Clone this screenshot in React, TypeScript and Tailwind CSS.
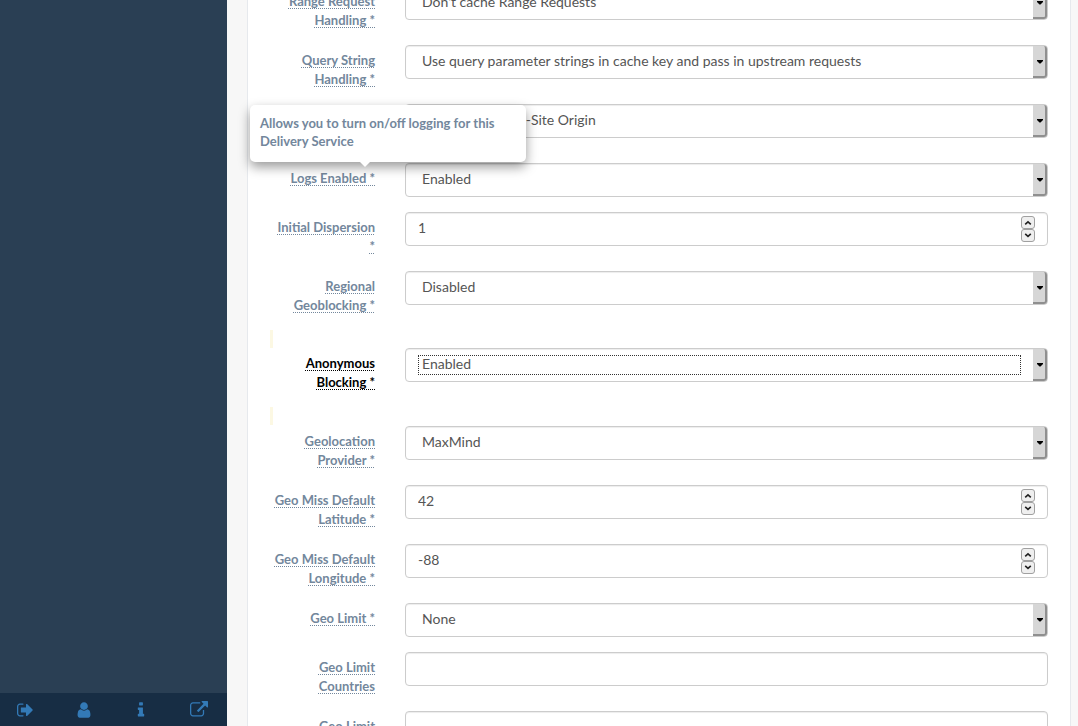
import React from "react";

type Field = {
  id: string;
  label: string;
  kind: "select" | "number" | "text";
  value?: string;
  help?: string;
  changed?: boolean;
  focused?: boolean;
};

const fields: Field[] = [
  { id: "range", label: "Range Request Handling *", kind: "select", value: "Don't cache Range Requests" },
  {
    id: "query",
    label: "Query String Handling *",
    kind: "select",
    value: "Use query parameter strings in cache key and pass in upstream requests",
  },
  { id: "multisite", label: "Use Multi-Site Origin *", kind: "select", value: "Do not use Multi-Site Origin" },
  {
    id: "logs",
    label: "Logs Enabled *",
    kind: "select",
    value: "Enabled",
    help: "Allows you to turn on/off logging for this Delivery Service",
  },
  { id: "dispersion", label: "Initial Dispersion *", kind: "number", value: "1" },
  { id: "regional", label: "Regional Geoblocking *", kind: "select", value: "Disabled" },
  { id: "anonymous", label: "Anonymous Blocking *", kind: "select", value: "Enabled", changed: true, focused: true },
  { id: "provider", label: "Geolocation Provider *", kind: "select", value: "MaxMind" },
  { id: "latitude", label: "Geo Miss Default Latitude *", kind: "number", value: "42" },
  { id: "longitude", label: "Geo Miss Default Longitude *", kind: "number", value: "-88" },
  { id: "limit", label: "Geo Limit *", kind: "select", value: "None" },
  { id: "countries", label: "Geo Limit Countries", kind: "text" },
  { id: "redirect", label: "Geo Limit Redirect URL", kind: "text" },
];

const controlBase =
  "block h-[34px] w-full appearance-none rounded border border-[#ccc] bg-white text-[14px] leading-5 text-[#555] shadow-[inset_0_1px_1px_rgba(0,0,0,0.075)] outline-none";

function SelectControl({ field }: { field: Field }) {
  return (
    <div className="relative">
      <select id={field.id} defaultValue={field.value} className={`${controlBase} pb-[2px] pl-4 pr-6`}>
        <option>{field.value}</option>
      </select>
      {field.focused && (
        <span className="pointer-events-none absolute bottom-[7px] left-[13px] right-[27px] top-[7px] border border-dotted border-[#333]" />
      )}
      <span className="pointer-events-none absolute bottom-px right-px top-px flex w-[14px] items-center justify-center rounded-r-[3px] border-b-2 border-r-2 border-[#8f8f8f] bg-[#d6d6d6]">
        <svg width="6" height="4" viewBox="0 0 6 4" className="ml-[2px] mt-px">
          <path d="M0 0h6v1L3.5 3.5h-1L0 1z" fill="#000" />
        </svg>
      </span>
    </div>
  );
}

function StepButton({ label, path }: { label: string; path: string }) {
  return (
    <button
      type="button"
      aria-label={label}
      className="flex h-[13px] w-[14px] items-center justify-center rounded-[3px] border border-[#a0a0a0] bg-[#efefef]"
    >
      <svg width="8" height="6" viewBox="0 0 8 6" fill="none" stroke="#222" strokeWidth="1.6">
        <path d={path} />
      </svg>
    </button>
  );
}

function NumberControl({ field }: { field: Field }) {
  return (
    <div className="relative">
      <input
        id={field.id}
        type="number"
        defaultValue={field.value}
        className={`${controlBase} pb-1 pl-3 pr-8 [appearance:textfield] [&::-webkit-inner-spin-button]:appearance-none`}
      />
      <div className="absolute right-[13px] top-1 flex flex-col">
        <StepButton label={`Increase ${field.label}`} path="M1.2 4.4 4 1.8l2.8 2.6" />
        <StepButton label={`Decrease ${field.label}`} path="M1.2 0.8 4 3.4l2.8-2.6" />
      </div>
    </div>
  );
}

function FormRow({ field }: { field: Field }) {
  return (
    <div className="mb-[15px] flex items-start gap-[30px]">
      <div className="relative w-[105px] shrink-0 pt-[6px] text-right text-[13px] font-bold leading-[19px]">
        <label
          htmlFor={field.id}
          className={`underline decoration-dotted decoration-1 underline-offset-2 [text-decoration-skip-ink:none] ${
            field.changed ? "text-black" : "text-[#73879c]"
          }`}
        >
          {field.label}
        </label>
        {field.help && (
          <div
            role="tooltip"
            className="absolute bottom-full left-[-20px] z-10 mb-px w-[276px] rounded-[5px] bg-white px-[10px] pb-3 pt-[9px] text-left leading-[18px] text-[#73879c] shadow-[0_5px_12px_rgba(0,0,0,0.4)]"
          >
            {field.help}
            <span className="absolute left-[110px] top-full border-x-[5px] border-t-[5px] border-x-transparent border-t-white" />
          </div>
        )}
      </div>
      <div className="min-w-0 flex-1">
        {field.kind === "select" && <SelectControl field={field} />}
        {field.kind === "number" && <NumberControl field={field} />}
        {field.kind === "text" && <input id={field.id} type="text" className={`${controlBase} px-3`} />}
      </div>
    </div>
  );
}

function Marker() {
  return <div className="h-[18px] w-[3px] bg-[#fcf8e3]" />;
}

function ChangedRow({ field }: { field: Field }) {
  return (
    <div className="mb-px">
      <Marker />
      <FormRow field={field} />
      <Marker />
    </div>
  );
}

const footerLinks = [
  {
    label: "Log out",
    path: "M640 1440q0 4 1 20t.5 26.5-3 23.5-10 19.5-20.5 6.5h-320q-119 0-203.5-84.5t-84.5-203.5v-704q0-119 84.5-203.5t203.5-84.5h320q13 0 22.5 9.5t9.5 22.5q0 4 1 20t.5 26.5-3 23.5-10 19.5-20.5 6.5h-320q-66 0-113 47t-47 113v704q0 66 47 113t113 47h312l11.5 1 11.5 3 8 5.5 7 9 2 13.5zm928-544q0 26-19 45l-544 544q-19 19-45 19t-45-19-19-45v-288h-448q-26 0-45-19t-19-45v-384q0-26 19-45t45-19h448v-288q0-26 19-45t45-19 45 19l544 544q19 19 19 45z",
  },
  {
    label: "Profile",
    path: "M1536 1399q0 109-62.5 187t-150.5 78h-854q-88 0-150.5-78t-62.5-187q0-85 8.5-160.5t31.5-152 58.5-131 94-89 134.5-34.5q131 128 313 128t313-128q76 0 134.5 34.5t94 89 58.5 131 31.5 152 8.5 160.5zm-256-887q0 159-112.5 271.5t-271.5 112.5-271.5-112.5-112.5-271.5 112.5-271.5 271.5-112.5 271.5 112.5 112.5 271.5z",
  },
  {
    label: "About",
    path: "M1216 1344v128q0 26-19 45t-45 19h-512q-26 0-45-19t-19-45v-128q0-26 19-45t45-19h64v-384h-64q-26 0-45-19t-19-45v-128q0-26 19-45t45-19h384q26 0 45 19t19 45v576h64q26 0 45 19t19 45zm-128-1152v192q0 26-19 45t-45 19h-256q-26 0-45-19t-19-45v-192q0-26 19-45t45-19h256q26 0 45 19t19 45z",
  },
  {
    label: "Open in new window",
    path: "M1408 928v320q0 119-84.5 203.5t-203.5 84.5h-832q-119 0-203.5-84.5t-84.5-203.5v-832q0-119 84.5-203.5t203.5-84.5h704q14 0 23 9t9 23v64q0 14-9 23t-23 9h-704q-66 0-113 47t-47 113v832q0 66 47 113t113 47h832q66 0 113-47t47-113v-320q0-14 9-23t23-9h64q14 0 23 9t9 23zm384-864v512q0 26-19 45t-45 19-45-19l-176-176-652 652q-10 10-23 10t-23-10l-114-114q-10-10-10-23t10-23l652-652-176-176q-19-19-19-45t19-45 45-19h512q26 0 45 19t19 45z",
  },
];

export default function App() {
  return (
    <div className="flex h-screen overflow-hidden bg-[#f7f7f7] font-[Lato,sans-serif]">
      <aside className="flex w-[227px] shrink-0 flex-col justify-end bg-[#2a3f54]">
        <nav className="flex h-[33px] items-center justify-between bg-[#172d44] pl-[17px] pr-[19px] pt-px">
          {footerLinks.map((link) => (
            <a key={link.label} href="#" aria-label={link.label} className="text-[#337ab7]">
              <svg width="18" height="18" viewBox="0 0 1792 1792" fill="currentColor">
                <path d={link.path} />
              </svg>
            </a>
          ))}
        </nav>
      </aside>
      <main className="min-w-0 flex-1 overflow-hidden pl-5 pr-[7px]">
        <form className="-mt-[14px] border-x border-[#e6e9ed] bg-white px-[22px]">
          {fields.map((field) =>
            field.changed ? <ChangedRow key={field.id} field={field} /> : <FormRow key={field.id} field={field} />
          )}
        </form>
      </main>
    </div>
  );
}
